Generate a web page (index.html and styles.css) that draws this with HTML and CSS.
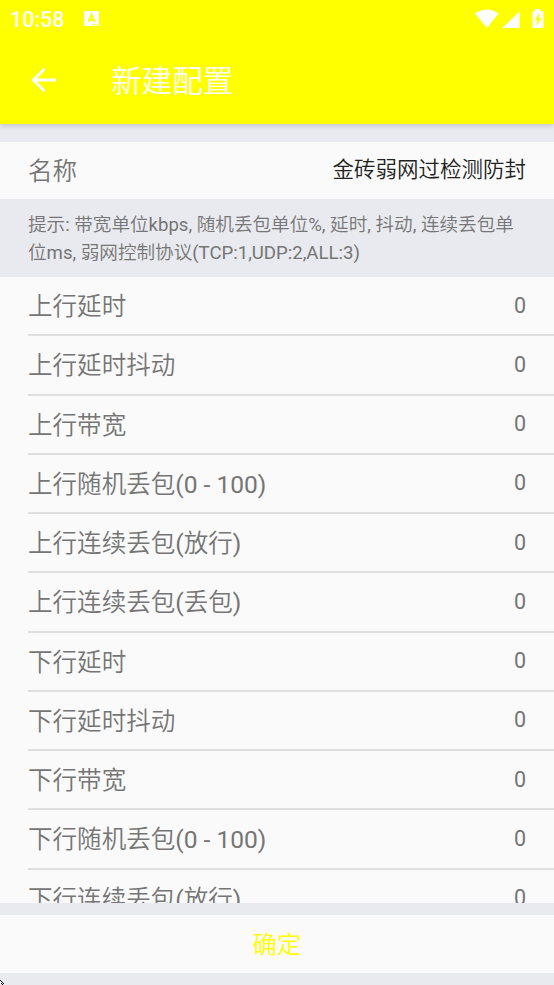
FILE: index.html
```html
<!DOCTYPE html>
<html lang="zh-CN">
<head>
<meta charset="utf-8">
<title>新建配置</title>
<link rel="stylesheet" href="styles.css">
</head>
<body>
<header class="top">
  <div class="status">
    <span class="clock">10:58</span>
    <svg class="app-icon" width="15" height="15" viewBox="0 0 15 15"><rect width="15" height="15" rx="1" fill="#fff"/><path d="M4.300 11 7.500 3.500 10.700 11M5.400 8.700h4.200" fill="none" stroke="#ff0" stroke-width="1.900"/><path d="M8 13.600h1.200M10.100 13.600h1.200M12.200 13.600h1.200" stroke="#ff0" stroke-width="1.200"/></svg>
    <svg class="signals" width="70" height="22" viewBox="0 0 70 22"><g fill="#fff"><path d="M0 4.400Q11.800-3.400 23.600 4.400L11.800 19Z"/><path d="M27.500 19V18.500L44.500 2.500V19Z"/><path d="M60 2V0H65V2H67.500Q68.500 2 68.500 3V18Q68.500 19 67.500 19H58.500Q57.500 19 57.500 18V3Q57.500 2 58.500 2Z"/></g><path d="M64 4 60 11.300H62.300L61.300 17 66.500 9.300H64Z" fill="#ff0"/></svg>
  </div>
  <div class="toolbar">
    <svg class="back" width="26" height="26" viewBox="0 0 26 26"><path d="M25 13H2.500M13.500 1.800 2.300 13l11.200 11.200" fill="none" stroke="#fff" stroke-width="2.900"/></svg>
    <h1>新建配置</h1>
  </div>
</header>
<main class="content">
  <div class="name-row"><span class="label">名称</span><span class="name">金砖弱网过检测防封</span></div>
  <p class="hint">提示: 带宽单位kbps, 随机丢包单位%, 延时, 抖动, 连续丢包单位ms, 弱网控制协议(TCP:1,UDP:2,ALL:3)</p>
  <ul class="list">
    <li><span class="label">上行延时</span><span class="value">0</span></li>
    <li><span class="label">上行延时抖动</span><span class="value">0</span></li>
    <li><span class="label">上行带宽</span><span class="value">0</span></li>
    <li><span class="label">上行随机丢包(0 - 100)</span><span class="value">0</span></li>
    <li><span class="label">上行连续丢包(放行)</span><span class="value">0</span></li>
    <li><span class="label">上行连续丢包(丢包)</span><span class="value">0</span></li>
    <li><span class="label">下行延时</span><span class="value">0</span></li>
    <li><span class="label">下行延时抖动</span><span class="value">0</span></li>
    <li><span class="label">下行带宽</span><span class="value">0</span></li>
    <li><span class="label">下行随机丢包(0 - 100)</span><span class="value">0</span></li>
    <li><span class="label">下行连续丢包(放行)</span><span class="value">0</span></li>
  </ul>
</main>
<button class="confirm">确定</button>
<svg class="pointer" width="4" height="5" viewBox="0 0 4 5" shape-rendering="crispEdges"><path d="M0 0h1v1H0zM1 1h1v1H1zM2 2h1v1H2zM3 3h1v1H3zM1 3h1v1H1zM2 4h1v1H2z"/><path d="M0 1h1v1h1v1H1v1H0zM2 3h1v1H2z" fill="#fff"/></svg>
</body>
</html>
```

FILE: styles.css
```css
* { box-sizing: border-box; }
body {
  margin: 0;
  height: 985px;
  overflow: hidden;
  display: flex;
  flex-direction: column;
  background: #e9eaef;
  color: #757575;
  font-family: Roboto, "Noto Sans CJK SC DemiLight", "Noto Sans CJK SC", sans-serif;
  font-weight: 400;
}
.top {
  flex: none;
  height: 123.5px;
  background: #ff0;
  color: #fff;
  box-shadow: 0 1px 6px rgba(0, 0, 0, .2);
}
.status {
  height: 37px;
  display: flex;
  align-items: center;
  padding: 0 12px 0 10px;
}
.clock { font-size: 21.5px; font-weight: 500; width: 74px; line-height: 38px; padding-top: 2px; }
.signals { margin-left: auto; margin-right: -3px; margin-top: 3px; }
.toolbar { height: 86px; display: flex; align-items: center; padding-left: 30.5px; }
.back { margin-right: 54.5px; }
h1 { margin: 0; font-size: 30.6px; font-weight: 400; line-height: 40px; padding-top: 3px; }
.content { height: 779.5px; flex: none; padding-top: 18px; overflow: hidden; }
.name-row {
  height: 57.5px;
  display: flex;
  align-items: center;
  justify-content: space-between;
  padding: 0 28px;
  background: #fafafa;
}
.label { font-size: 24.55px; line-height: 36px; padding-top: 3px; }
.name { font-size: 21.5px; line-height: 32px; color: #212121; margin-top: -1px; }
.hint { margin: 0; height: 78px; padding: 13px 28px 0; font-size: 18.6px; line-height: 27.5px; letter-spacing: -.01px; }
.list { margin: 0; padding: 0 0 0 28px; list-style: none; background: #fafafa; }
li {
  height: 59.25px;
  display: flex;
  align-items: center;
  justify-content: space-between;
  padding-right: 28px;
  border-bottom: 2px solid #dedede;
}
.value { font-size: 21.5px; margin-top: -1px; }
.confirm {
  flex: none;
  height: 58px;
  margin-top: 12px;
  border: 0;
  padding: 0 0 3px;
  background: #fafafa;
  color: #ff0;
  font: inherit;
  font-size: 24.4px;
}
.pointer { position: absolute; left: 0; bottom: 0; }
```
